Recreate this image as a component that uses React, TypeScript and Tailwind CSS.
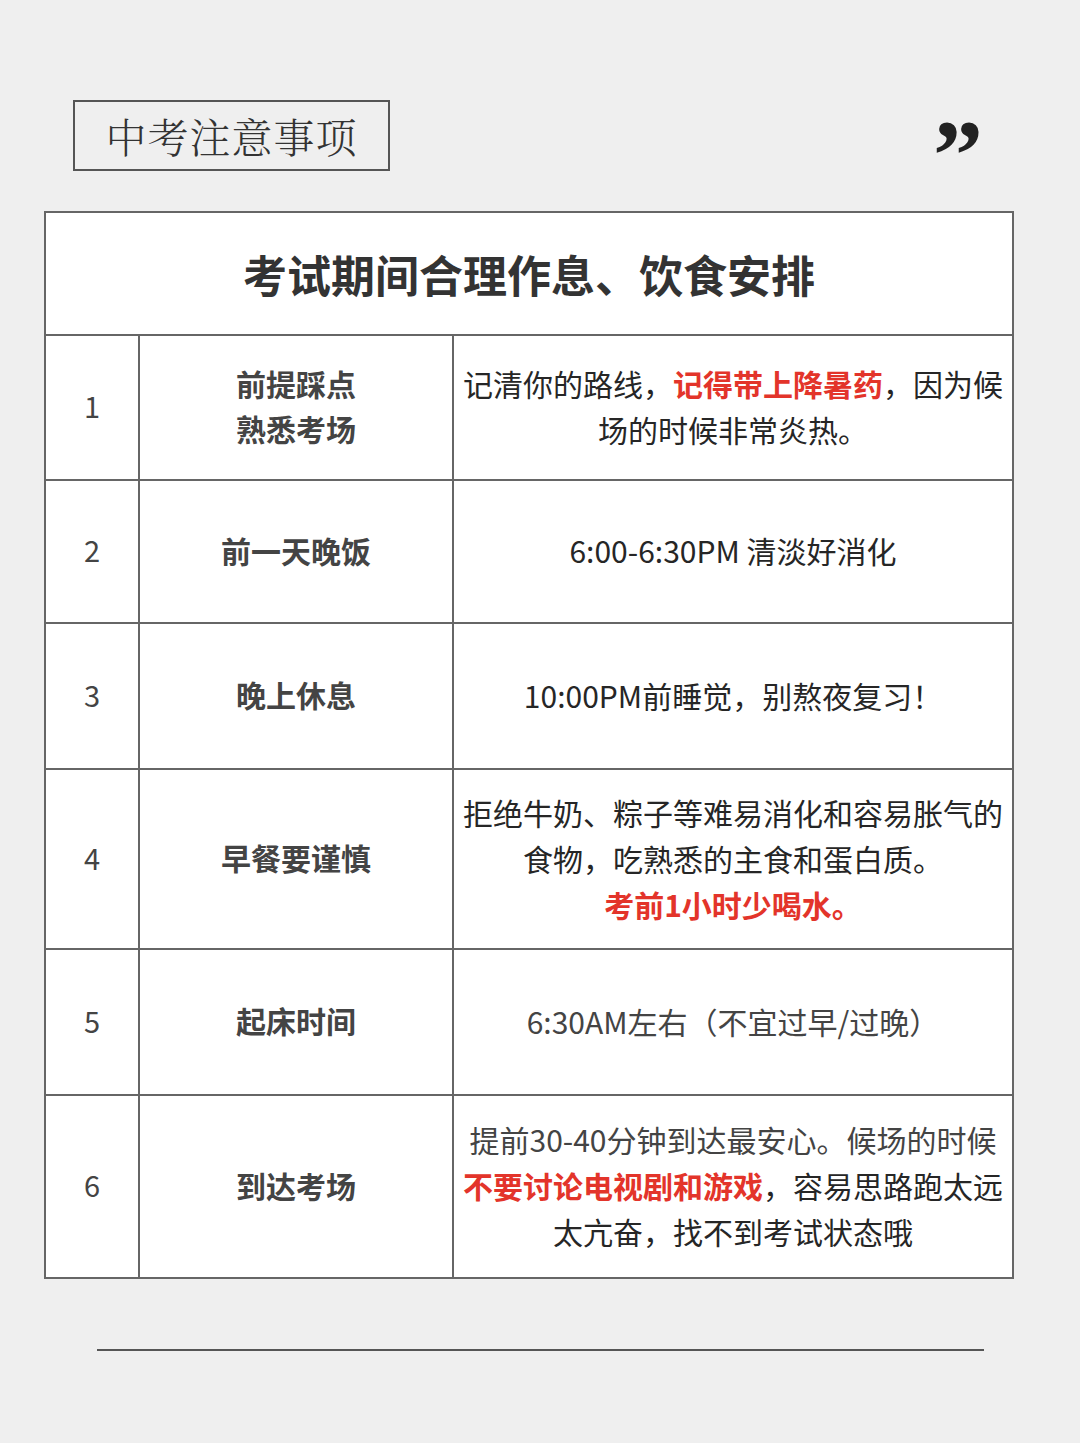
import React from "react";

const CJK = '"Noto Sans CJK SC", "Noto Sans", sans-serif';
const SERIF = '"Noto Serif CJK SC", "Liberation Serif", "Noto Sans CJK SC", serif';

type Row = { n: string; label: React.ReactNode; body: React.ReactNode; h: string };

const Red = ({ children }: { children: React.ReactNode }) => (
  <span className="text-[#e3342a] font-bold">{children}</span>
);

const rows: Row[] = [
  {
    n: "1",
    h: "h-[145px]",
    label: (
      <>
        前提踩点
        <br />
        熟悉考场
      </>
    ),
    body: (
      <>
        记清你的路线，<Red>记得带上降暑药</Red>，因为候
        <br />
        场的时候非常炎热。
      </>
    ),
  },
  { n: "2", h: "h-[143px]", label: "前一天晚饭", body: "6:00-6:30PM 清淡好消化" },
  { n: "3", h: "h-[146px]", label: "晚上休息", body: "10:00PM前睡觉，别熬夜复习！" },
  {
    n: "4",
    h: "h-[180px]",
    label: "早餐要谨慎",
    body: (
      <>
        拒绝牛奶、粽子等难易消化和容易胀气的
        <br />
        食物，吃熟悉的主食和蛋白质。
        <br />
        <Red>考前1小时少喝水。</Red>
      </>
    ),
  },
  {
    n: "5",
    h: "h-[146px]",
    label: "起床时间",
    body: <span className="text-[#444]">6:30AM左右（不宜过早/过晚）</span>,
  },
  {
    n: "6",
    h: "h-[183px]",
    label: "到达考场",
    body: (
      <>
        <span className="text-[#444]">提前30-40分钟到达最安心。候场的时候</span>
        <br />
        <Red>不要讨论电视剧和游戏</Red>，容易思路跑太远
        <br />
        太亢奋，找不到考试状态哦
      </>
    ),
  },
];

export default function App() {
  return (
    <div
      className="w-[1080px] h-[1443px] bg-[#efefef] overflow-hidden"
      style={{ fontFamily: CJK }}
    >
      <div className="flex items-start justify-between pt-[100px] pl-[73px] pr-[97px]">
        <div className="w-[317px] h-[71px] border-2 border-[#555] flex items-center justify-center">
          <span
            className="text-[41px] leading-none tracking-[1px] text-[#333] font-light"
            style={{ fontFamily: SERIF }}
          >
            中考注意事项
          </span>
        </div>
        <span
          className="mt-[5px] text-[100px] leading-none font-bold text-[#222] h-[50px] overflow-visible"
          style={{ fontFamily: '"Liberation Serif", serif' }}
        >
          ”
        </span>
      </div>

      <div className="mt-[40px] ml-[44px] w-[970px] border-2 border-[#666] bg-white">
        <div className="h-[121px] flex items-center justify-center">
          <span className="text-[44px] font-bold text-[#333] leading-none">
            考试期间合理作息、饮食安排
          </span>
        </div>
        {rows.map((r) => (
          <div
            key={r.n}
            className={`grid grid-cols-[92px_314px_1fr] border-t-2 border-[#666] ${r.h}`}
          >
            <div className="flex items-center justify-center text-[29px] text-[#444] pb-[3px]">
              {r.n}
            </div>
            <div className="border-l-2 border-[#666] flex items-center justify-center text-center text-[30px] leading-[45px] font-bold text-[#444] pb-[3px]">
              <div>{r.label}</div>
            </div>
            <div className="border-l-2 border-[#666] flex items-center justify-center text-center text-[30px] leading-[46px] text-[#262626] whitespace-nowrap pb-[3px]">
              <div>{r.body}</div>
            </div>
          </div>
        ))}
      </div>

      <div className="mt-[70px] ml-[97px] w-[887px] h-[2px] bg-[#555]" />
    </div>
  );
}
